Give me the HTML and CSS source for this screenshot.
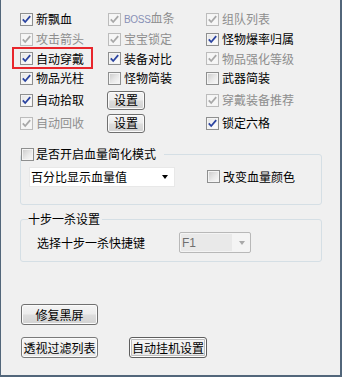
FILE: index.html
```html
<!DOCTYPE html>
<html lang="zh-CN">
<head>
<meta charset="utf-8">
<link rel="stylesheet" href="styles.css">
</head>
<body>
<div class="win">
  <div class="opts">
    <label class="opt"><span class="cb on"><svg viewBox="0 0 11 11"><path d="M1.8 5.3 4.2 8 9.2 2.2"/></svg></span><span>新飘血</span></label>
    <label class="opt dis"><span class="cb on"><svg viewBox="0 0 11 11"><path d="M1.8 5.3 4.2 8 9.2 2.2"/></svg></span><span><span class="latin">BOSS</span>血条</span></label>
    <label class="opt dis"><span class="cb on"><svg viewBox="0 0 11 11"><path d="M1.8 5.3 4.2 8 9.2 2.2"/></svg></span><span>组队列表</span></label>

    <label class="opt dis"><span class="cb on"><svg viewBox="0 0 11 11"><path d="M1.8 5.3 4.2 8 9.2 2.2"/></svg></span><span>攻击箭头</span></label>
    <label class="opt dis"><span class="cb on"><svg viewBox="0 0 11 11"><path d="M1.8 5.3 4.2 8 9.2 2.2"/></svg></span><span>宝宝锁定</span></label>
    <label class="opt"><span class="cb on"><svg viewBox="0 0 11 11"><path d="M1.8 5.3 4.2 8 9.2 2.2"/></svg></span><span>怪物爆率归属</span></label>

    <label class="opt mark"><span class="cb on"><svg viewBox="0 0 11 11"><path d="M1.8 5.3 4.2 8 9.2 2.2"/></svg></span><span>自动穿戴</span></label>
    <label class="opt"><span class="cb on"><svg viewBox="0 0 11 11"><path d="M1.8 5.3 4.2 8 9.2 2.2"/></svg></span><span>装备对比</span></label>
    <label class="opt dis"><span class="cb on"><svg viewBox="0 0 11 11"><path d="M1.8 5.3 4.2 8 9.2 2.2"/></svg></span><span>物品强化等级</span></label>

    <label class="opt"><span class="cb on"><svg viewBox="0 0 11 11"><path d="M1.8 5.3 4.2 8 9.2 2.2"/></svg></span><span>物品光柱</span></label>
    <label class="opt"><span class="cb"></span><span>怪物简装</span></label>
    <label class="opt"><span class="cb"></span><span>武器简装</span></label>

    <label class="opt"><span class="cb on"><svg viewBox="0 0 11 11"><path d="M1.8 5.3 4.2 8 9.2 2.2"/></svg></span><span>自动拾取</span></label>
    <div class="cell"><button class="btn small">设置</button></div>
    <label class="opt dis"><span class="cb on"><svg viewBox="0 0 11 11"><path d="M1.8 5.3 4.2 8 9.2 2.2"/></svg></span><span>穿戴装备推荐</span></label>

    <label class="opt dis"><span class="cb on"><svg viewBox="0 0 11 11"><path d="M1.8 5.3 4.2 8 9.2 2.2"/></svg></span><span>自动回收</span></label>
    <div class="cell"><button class="btn small">设置</button></div>
    <label class="opt"><span class="cb on"><svg viewBox="0 0 11 11"><path d="M1.8 5.3 4.2 8 9.2 2.2"/></svg></span><span>锁定六格</span></label>
  </div>

  <fieldset class="group g1">
    <legend class="lg1"><span class="cb"></span><span>是否开启血量简化模式</span></legend>
    <div class="g1-body">
      <div class="select"><span>百分比显示血量值</span><span class="arrow"></span></div>
      <label class="opt color"><span class="cb"></span><span>改变血量颜色</span></label>
    </div>
  </fieldset>

  <fieldset class="group g2">
    <legend class="lg2">十步一杀设置</legend>
    <div class="g2-body">
      <span>选择十步一杀快捷键</span>
      <div class="combo"><span class="field latin2">F1</span><span class="arrow grey"></span></div>
    </div>
  </fieldset>

  <div class="row r1"><button class="btn wide">修复黑屏</button></div>
  <div class="row r2">
    <button class="btn wide flat">透视过滤列表</button>
    <button class="btn wide flat focus">自动挂机设置</button>
  </div>
</div>
</body>
</html>
```

FILE: styles.css
```css
html, body {
  margin: 0;
  padding: 0;
  background: #f0f0f0;
}
body {
  font-family: "Noto Sans CJK SC", "Noto Sans", sans-serif;
  font-size: 12px;
  line-height: 14px;
  color: #000;
}
.win {
  box-sizing: border-box;
  width: 342px;
  height: 377px;
  background: #f0f0f0;
  border-left: 1px solid #52667a;
  border-right: 2px solid #52667a;
  border-bottom: 2px solid #52667a;
  padding: 9px 18px 0 19px;
}
.opts {
  display: grid;
  grid-template-columns: 88px 98px 1fr;
  grid-template-rows: 20px 20px 19px 20px 24px 22px;
}
.opt {
  display: flex;
  align-items: center;
  gap: 3px;
  white-space: nowrap;
}
.opt.dis { color: #8e8e8e; }
.opt.dis .latin { color: #8890b6; }
.latin {
  font-family: "Liberation Sans", sans-serif;
  font-size: 10px;
  letter-spacing: -0.3px;
}
.cell {
  display: flex;
  align-items: center;
}
.mark { position: relative; }
.mark::after {
  content: "";
  position: absolute;
  left: -8px;
  top: -2px;
  width: 81px;
  height: 22px;
  box-sizing: border-box;
  border: 2px solid #e8262c;
}

/* checkbox */
.cb {
  flex: none;
  display: flex;
  box-sizing: border-box;
  width: 13px;
  height: 13px;
  border: 1px solid #8e8f8f;
  background: linear-gradient(135deg, #c9c9c9 0%, #e9e9e9 55%, #fafafa 100%);
  box-shadow: inset 0 0 0 1px #f4f4f4;
  color: #2a43a0;
}
.cb.on {
  background: linear-gradient(135deg, #e2e2e2 0%, #f6f6f6 60%, #ffffff 100%);
}
.dis .cb {
  border-color: #bcbcbc;
  background: #f6f6f6;
  color: #a8a8a8;
}
.cb svg {
  width: 11px;
  height: 11px;
  display: block;
}
.cb path {
  fill: none;
  stroke: currentColor;
  stroke-width: 1.8;
}

/* buttons */
.btn {
  font-family: inherit;
  font-size: 12px;
  line-height: 14px;
  color: #000;
  padding: 0;
  box-sizing: border-box;
  border: 1px solid #707070;
  border-radius: 3px;
  background: linear-gradient(#f4f4f4 0%, #ececec 48%, #dedede 52%, #d2d2d2 100%);
  box-shadow: inset 0 0 0 1px #fbfbfb;
  cursor: default;
}
.btn.small {
  width: 38px;
  height: 19px;
  margin-left: -1px;
}
.btn.wide {
  width: 77px;
  height: 21px;
}
.btn.flat {
  background: linear-gradient(#f6f6f6 0%, #efefef 50%, #e6e6e6 100%);
  border-color: #7a7a7a;
}
.btn.focus {
  width: 78px;
  border-color: #5e5e5e;
  box-shadow: inset 0 0 0 1px #ffffff, inset 0 0 0 2px #bdbdbd;
}

/* group boxes */
.group {
  margin: 0;
  padding: 0;
  border: 1px solid #d5dfe5;
  border-radius: 3px;
  min-width: 0;
}
.g1 { margin-top: 13px; }
.g2 { margin-top: 7px; }
.lg1 {
  display: flex;
  align-items: center;
  gap: 2px;
  padding: 0 8px 0 0;
  height: 14px;
}
.lg2 {
  padding: 0 2px 0 0;
  margin-left: 7px;
  height: 14px;
}
.g1-body {
  display: flex;
  align-items: center;
  padding: 6px 0 17px 8px;
}
.select {
  box-sizing: border-box;
  width: 146px;
  height: 20px;
  background: #fff;
  border: 1px solid #e8e8e8;
  display: flex;
  align-items: center;
  justify-content: space-between;
  padding: 0 6px 0 1px;
}
.arrow {
  width: 0;
  height: 0;
  border-left: 3.5px solid transparent;
  border-right: 3.5px solid transparent;
  border-top: 4px solid #000;
}
.arrow.grey { border-top-color: #a9a9a9; }
.opt.color {
  margin-left: 32px;
  margin-top: -1px;
}
.g2-body {
  display: flex;
  align-items: center;
  padding: 6px 0 8px 16px;
}
.combo {
  box-sizing: border-box;
  margin-left: 34px;
  width: 72px;
  height: 21px;
  border: 1px solid #b8b8b8;
  border-radius: 2px;
  background: #f4f4f4;
  display: flex;
  align-items: center;
  justify-content: space-between;
  padding: 1px 5px 1px 1px;
}
.field {
  box-sizing: border-box;
  width: 51px;
  height: 17px;
  background: #e9e9e9;
  display: flex;
  align-items: center;
  padding-left: 1px;
}
.latin2 {
  font-family: "Liberation Sans", sans-serif;
  font-size: 12px;
  color: #6f6f6f;
}
.row {
  display: flex;
  padding-left: 1px;
}
.r1 { margin-top: 42px; }
.r2 {
  margin-top: 12px;
  gap: 31px;
}
```
